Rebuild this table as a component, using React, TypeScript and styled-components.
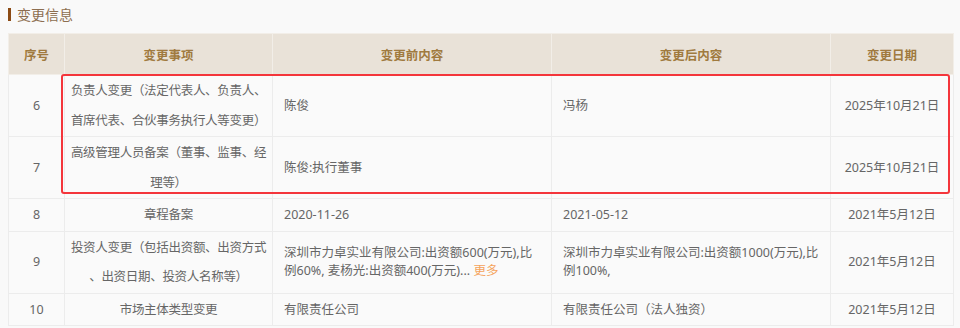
import styled, { createGlobalStyle } from "styled-components";

const GlobalStyle = createGlobalStyle`
  body {
    margin: 0;
    background: #f9f9f9;
    font-family: "Noto Sans", "Noto Sans CJK SC", sans-serif;
  }
`;

const Page = styled.div`
  padding: 4px 7px 0 8px;
`;

const SectionTitle = styled.div`
  display: flex;
  align-items: center;
  gap: 6px;
  height: 20px;
  margin-bottom: 9px;
  font-size: 14px;
  color: #8d6e50;
`;

const Bar = styled.span`
  width: 3px;
  height: 13px;
  background: #8b4a14;
`;

const TableWrap = styled.div`
  position: relative;
`;

const Table = styled.table`
  width: 945px;
  border-collapse: collapse;
  table-layout: fixed;
  font-size: 12.5px;
  color: #666;
`;

const Th = styled.th`
  height: 40px;
  padding: 0;
  background: #e9e2d8;
  color: #a07a3f;
  font-weight: bold;
  border: 1px solid #f2eee8;
`;

const Td = styled.td<{ $align?: "left" | "center"; $pad?: number }>`
  padding: 1px ${(p) => p.$pad ?? 11}px;
  line-height: 29.5px;
  text-align: ${(p) => p.$align ?? "left"};
  vertical-align: middle;
  background: #fafafa;
  border: 1px solid #ececec;
`;

const ItemTd = styled(Td)`
  letter-spacing: -0.3px;
  line-break: anywhere;
`;

const Tight = styled.div`
  line-height: 18px;
`;

const More = styled.span`
  color: #f5a35c;
  cursor: pointer;
`;

const Highlight = styled.div`
  position: absolute;
  left: 53px;
  top: 41px;
  width: 889px;
  height: 120px;
  border: 2px solid #f4353b;
  border-radius: 3px;
  box-sizing: border-box;
  pointer-events: none;
`;

interface Change {
  no: number;
  item: string;
  before: React.ReactNode;
  after: React.ReactNode;
  date: string;
}

const rows: Change[] = [
  {
    no: 6,
    item: "负责人变更（法定代表人、负责人、首席代表、合伙事务执行人等变更）",
    before: "陈俊",
    after: "冯杨",
    date: "2025年10月21日",
  },
  {
    no: 7,
    item: "高级管理人员备案（董事、监事、经理等）",
    before: "陈俊:执行董事",
    after: "",
    date: "2025年10月21日",
  },
  { no: 8, item: "章程备案", before: "2020-11-26", after: "2021-05-12", date: "2021年5月12日" },
  {
    no: 9,
    item: "投资人变更（包括出资额、出资方式、出资日期、投资人名称等）",
    before: (
      <Tight>
        深圳市力卓实业有限公司:出资额600(万元),比
        <br />
        例60%, 麦杨光:出资额400(万元)... <More>更多</More>
      </Tight>
    ),
    after: (
      <Tight>
        深圳市力卓实业有限公司:出资额1000(万元),比
        <br />
        例100%,
      </Tight>
    ),
    date: "2021年5月12日",
  },
  {
    no: 10,
    item: "市场主体类型变更",
    before: "有限责任公司",
    after: "有限责任公司（法人独资）",
    date: "2021年5月12日",
  },
];

const App = () => {
  return (
    <Page>
      <GlobalStyle />
      <SectionTitle>
        <Bar />
        变更信息
      </SectionTitle>
      <TableWrap>
        <Table>
          <colgroup>
            <col style={{ width: 56 }} />
            <col style={{ width: 208 }} />
            <col style={{ width: 279 }} />
            <col style={{ width: 279 }} />
            <col style={{ width: 123 }} />
          </colgroup>
          <thead>
            <tr>
              <Th>序号</Th>
              <Th>变更事项</Th>
              <Th>变更前内容</Th>
              <Th>变更后内容</Th>
              <Th>变更日期</Th>
            </tr>
          </thead>
          <tbody>
            {rows.map((r) => (
              <tr key={r.no}>
                <Td $align="center" $pad={4}>{r.no}</Td>
                <ItemTd $align="center" $pad={2}>{r.item}</ItemTd>
                <Td>{r.before}</Td>
                <Td>{r.after}</Td>
                <Td $align="center" $pad={4}>{r.date}</Td>
              </tr>
            ))}
          </tbody>
        </Table>
        <Highlight />
      </TableWrap>
    </Page>
  );
};

export default App;
